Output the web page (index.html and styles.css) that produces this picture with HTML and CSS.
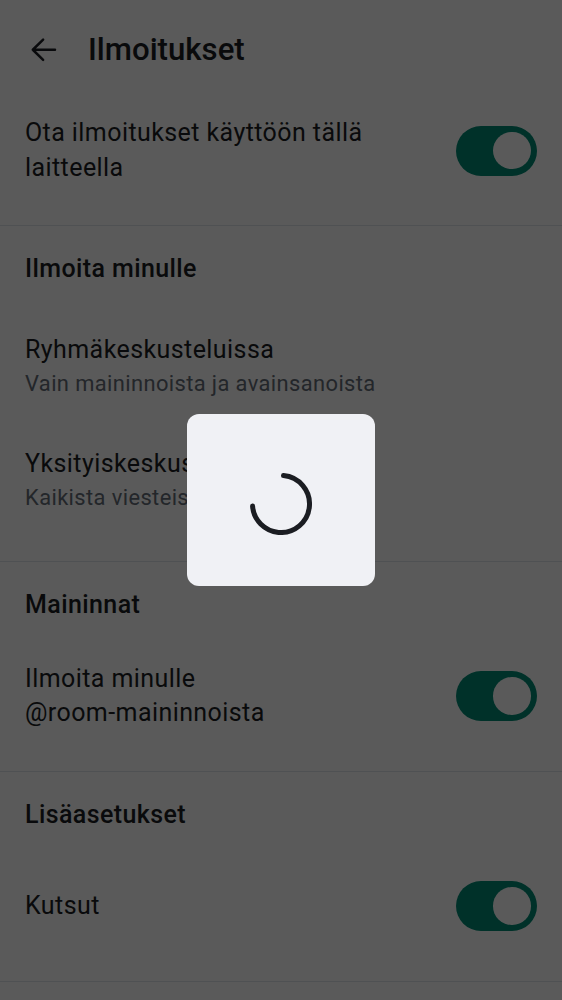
FILE: index.html
```html
<!DOCTYPE html>
<html lang="fi">
<head>
<meta charset="utf-8">
<title>Ilmoitukset</title>
<link rel="stylesheet" href="styles.css">
</head>
<body>
<div class="screen">
  <header class="topbar">
    <button class="back" aria-label="Takaisin">
      <svg viewBox="0 0 24 24" width="37.5" height="37.5" aria-hidden="true">
        <path d="M19.2 12H5M11.6 5.5L5 12l6.6 6.5" fill="none" stroke="#1b1d22" stroke-width="1.6" stroke-linecap="round" stroke-linejoin="round"/>
      </svg>
    </button>
    <h1 class="title">Ilmoitukset</h1>
  </header>

  <section class="group">
    <div class="row row-first">
      <div class="texts"><div class="label">Ota ilmoitukset käyttöön tällä laitteella</div></div>
      <span class="switch"><span class="thumb"></span></span>
    </div>
  </section>

  <section class="group">
    <h2 class="group-title">Ilmoita minulle</h2>
    <div class="row row-sub">
      <div class="texts">
        <div class="label">Ryhmäkeskusteluissa</div>
        <div class="sub">Vain maininnoista ja avainsanoista</div>
      </div>
    </div>
    <div class="row row-sub">
      <div class="texts">
        <div class="label">Yksityiskeskusteluissa</div>
        <div class="sub">Kaikista viesteistä</div>
      </div>
    </div>
  </section>

  <section class="group">
    <h2 class="group-title">Maininnat</h2>
    <div class="row">
      <div class="texts"><div class="label">Ilmoita minulle<br>@room-maininnoista</div></div>
      <span class="switch"><span class="thumb"></span></span>
    </div>
  </section>

  <section class="group">
    <h2 class="group-title">Lisäasetukset</h2>
    <div class="row">
      <div class="texts"><div class="label">Kutsut</div></div>
      <span class="switch"><span class="thumb"></span></span>
    </div>
  </section>
</div>

<div class="scrim">
  <div class="dialog" role="progressbar" aria-label="Ladataan">
    <svg class="spinner" viewBox="0 0 62 62" width="62" height="62" aria-hidden="true">
      <circle cx="31" cy="31" r="28.5" fill="none" stroke="#1b1d22" stroke-width="5" stroke-linecap="round" stroke-dasharray="129.5 200" transform="rotate(-85 31 31)"/>
    </svg>
  </div>
</div>
</body>
</html>
```

FILE: styles.css
```css
* {
  box-sizing: border-box;
}

html, body {
  margin: 0;
  padding: 0;
}

body {
  width: 562px;
  height: 1000px;
  overflow: hidden;
  background: #ffffff;
  font-family: Roboto, "Liberation Sans", sans-serif;
  color: #1b1d22;
}

.screen {
  display: flex;
  flex-direction: column;
}

.topbar {
  height: 100px;
  flex: none;
  display: flex;
  align-items: center;
  padding-left: 6px;
}

.back {
  width: 75px;
  height: 75px;
  border: 0;
  padding: 0;
  background: transparent;
  display: flex;
  align-items: center;
  justify-content: center;
}

.back svg {
  display: block;
}

.title {
  margin: 0 0 0 7px;
  font-size: 31.2px;
  line-height: 43.7px;
  font-weight: 500;
  color: #1b1d22;
}

.group {
  padding-bottom: 24px;
  border-bottom: 1px solid #e1e6ec;
}

.group-title {
  margin: 0;
  height: 83px;
  padding: 26px 25px 0;
  font-size: 25px;
  line-height: 34.3px;
  letter-spacing: 0.4px;
  font-weight: 500;
  color: #1b1d22;
}

.row {
  display: flex;
  align-items: center;
  gap: 25px;
  min-height: 102px;
  padding: 16px 25px;
}

.row-first {
  min-height: 101px;
}

.row-sub {
  min-height: 114px;
  padding: 0 25px;
}

.texts {
  flex: 1;
  min-width: 0;
}

.label {
  font-size: 25px;
  line-height: 34.3px;
  letter-spacing: 0.42px;
  font-weight: 400;
  color: #1b1d22;
}

.sub {
  font-size: 21.9px;
  line-height: 31.2px;
  letter-spacing: 0.39px;
  color: #656d77;
}

.switch {
  flex: none;
  width: 81px;
  height: 50px;
  border-radius: 25px;
  background: #008a74;
  display: flex;
  align-items: center;
  justify-content: flex-end;
  padding: 0 6.25px;
}

.thumb {
  width: 37.5px;
  height: 37.5px;
  border-radius: 50%;
  background: #ffffff;
}

.scrim {
  position: fixed;
  inset: 0;
  background: rgba(0, 0, 0, 0.647);
  display: flex;
  align-items: center;
  justify-content: center;
}

.dialog {
  width: 188px;
  height: 172px;
  border-radius: 12px;
  background: #f0f1f5;
  display: flex;
  align-items: center;
  justify-content: center;
  padding-top: 8px;
}

.spinner {
  display: block;
}
```
